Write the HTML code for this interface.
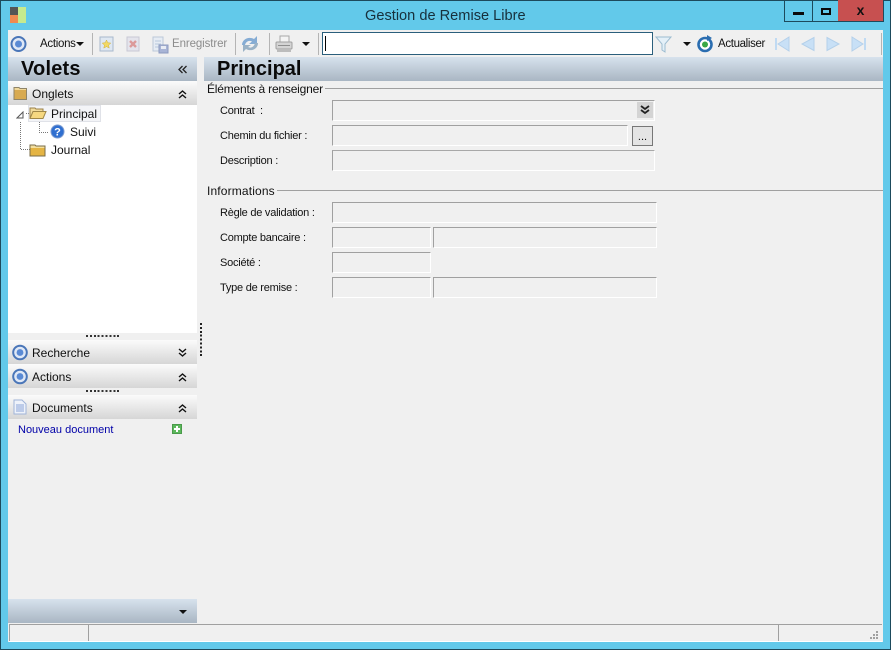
<!DOCTYPE html>
<html>
<head>
<meta charset="utf-8">
<style>
html,body{margin:0;padding:0;}
body{width:891px;height:650px;overflow:hidden;position:relative;background:#62c9ea;font-family:"Liberation Sans",sans-serif;font-size:12px;color:#111;}
div,span,svg{position:absolute;display:block;}
.t{white-space:nowrap;line-height:14px;}
.l{font-size:11px;letter-spacing:-.24px;left:220px;}
.f{box-sizing:border-box;background:#f0f0f0;border-top:1px solid #a0a0a0;border-left:1px solid #a0a0a0;border-right:1px solid #fff;border-bottom:1px solid #fff;}
.h{left:8px;width:189px;height:24px;background:linear-gradient(#fbfbfb,#d6d6d6);}
.b{left:8px;height:24px;background:linear-gradient(#d7e2ed,#a9b6c3);}
.sep{width:1px;height:22px;top:33px;background:#b4b4b4;}
.grip{height:2px;background:repeating-linear-gradient(90deg,#333 0 2px,transparent 2px 3.9px);}
.ttl{font-size:20px;line-height:22px;font-weight:bold;color:#0a0a0a;}
</style>
</head>
<body>
<!-- window frame -->
<div style="left:0;top:0;width:891px;height:1px;background:#1d4a5c"></div>
<div style="left:0;top:0;width:1px;height:650px;background:#1d4a5c"></div>
<div style="left:890px;top:0;width:1px;height:650px;background:#1d4a5c"></div>
<div style="left:0;top:649px;width:891px;height:1px;background:#1d4a5c"></div>

<!-- app icon -->
<div style="left:10px;top:7px;width:8px;height:8px;background:#555"></div>
<div style="left:10px;top:15px;width:8px;height:8px;background:#f08a50"></div>
<div style="left:18px;top:7px;width:8px;height:16px;background:#c6ea8e"></div>

<div class="t" style="left:365px;top:7px;font-size:14.6px;line-height:18px;color:#17303c">Gestion de Remise Libre</div>

<!-- caption buttons -->
<div style="left:784px;top:0;width:1px;height:22px;background:#1d4a5c"></div>
<div style="left:784px;top:21px;width:99px;height:1px;background:#1d4a5c"></div>
<div style="left:812px;top:0;width:1px;height:22px;background:#1d4a5c"></div>
<div style="left:838px;top:0;width:45px;height:21px;background:#c75050"></div>
<div style="left:883px;top:0;width:1px;height:22px;background:#1d4a5c"></div>
<div style="left:793px;top:12px;width:11px;height:3px;background:#0a0a0a"></div>
<div style="left:821px;top:8px;width:10px;height:7px;box-sizing:border-box;border:2px solid #0a0a0a"></div>
<div class="t" style="left:838px;top:3px;width:45px;text-align:center;font-weight:bold;font-size:14px;color:#111">x</div>

<!-- client -->
<div style="left:8px;top:30px;width:875px;height:612px;background:#f0f0f0"></div>

<!-- toolbar -->
<svg style="left:10px;top:35px" width="18" height="18" viewBox="0 0 18 18"><circle cx="8.500" cy="9" r="7" fill="#dfe8f6" stroke="#4a76b8" stroke-width="2"/><circle cx="8.500" cy="9" r="3.500" fill="#5a8ad4"/></svg>
<div class="t" style="left:40px;top:37px;font-size:11.500px;letter-spacing:-.3px">Actions</div>
<svg style="left:76px;top:42px" width="9" height="5"><path d="M0 0H8L4 4Z" fill="#111"/></svg>
<div class="sep" style="left:92px"></div>
<svg style="left:99px;top:36px" width="16" height="16"><rect x="1" y="1" width="13" height="14" fill="#dfe8f2" stroke="#a9b9cc"/><path d="M7.500 4l1.300 2.700 3 .4-2.200 2 .6 3-2.700-1.500-2.700 1.500.6-3-2.200-2 3-.4z" fill="#f2d964" stroke="#d0b040" stroke-width=".5"/></svg>
<svg style="left:125px;top:36px" width="16" height="16"><rect x="2" y="1" width="12" height="14" fill="#e4e4ec" stroke="#c8c8d4"/><path d="M5 5l6 6M11 5l-6 6" stroke="#dc9a9a" stroke-width="2.400"/></svg>
<svg style="left:152px;top:36px" width="18" height="18"><rect x="1" y="1" width="10" height="14" fill="#e6ecf4" stroke="#bcc8d8"/><path d="M3 5h6M3 8h6M3 11h6" stroke="#b8c8dc"/><rect x="7" y="9" width="9" height="8" fill="#a8b4d6" stroke="#8c9abf"/><rect x="9" y="10" width="5" height="3" fill="#e8ecf4"/></svg>
<div class="t" style="left:172px;top:37px;font-size:11.500px;letter-spacing:-.1px;color:#8c8c8c">Enregistrer</div>
<div class="sep" style="left:235px"></div>
<svg style="left:241px;top:35px" width="18" height="18"><path d="M1 10C1 4 8 1 13 4L16 1V9H8L11 6.500C8 5 5 6.500 4 10Z" fill="#85acd4"/><path d="M17 8C17 14 10 17 5 14L2 17V10H10L7 12C10 13.500 13 12 14 8Z" fill="#9ab2c6"/></svg>
<div class="sep" style="left:269px"></div>
<svg style="left:275px;top:35px" width="18" height="18"><rect x="5" y="1" width="9" height="6" fill="#f4f4f4" stroke="#a8a8a8"/><rect x="1" y="7" width="16" height="7" rx="1" fill="#d4d4d4" stroke="#a0a0a0"/><rect x="2" y="14" width="14" height="3" fill="#bcbcbc"/><rect x="3" y="10" width="12" height="1" fill="#8e8e8e"/></svg>
<svg style="left:302px;top:42px" width="9" height="5"><path d="M0 0H8L4 4Z" fill="#111"/></svg>
<div class="sep" style="left:318px"></div>
<div style="left:322px;top:32px;width:331px;height:23px;box-sizing:border-box;background:#fff;border:1px solid #2b5f7c"></div>
<div style="left:325px;top:36px;width:1px;height:15px;background:#000"></div>
<svg style="left:655px;top:35px" width="18" height="18"><path d="M1 2H16L10 9V17L7 15V9Z" fill="#e4f0f8" stroke="#9dbcd0"/></svg>
<svg style="left:683px;top:42px" width="9" height="5"><path d="M0 0H8L4 4Z" fill="#111"/></svg>
<svg style="left:696px;top:35px" width="18" height="18"><circle cx="9" cy="9.500" r="6.500" fill="#fff" stroke="#2a6db0" stroke-width="2.600"/><circle cx="9" cy="9.500" r="3" fill="#3aa845"/><path d="M11 0L16 3L11 6Z" fill="#2a6db0"/></svg>
<div class="t" style="left:718px;top:37px;font-size:11.500px;letter-spacing:-.35px">Actualiser</div>
<svg style="left:774px;top:36px" width="16" height="16"><rect x="1" y="2" width="2" height="12" fill="#c0daf2"/><path d="M15 1V15L4 8Z" fill="#c8e0f6" stroke="#b4d0ea"/></svg>
<svg style="left:800px;top:36px" width="16" height="16"><path d="M14 1.500V14.500L2 8Z" fill="#c8e0f6" stroke="#b4d0ea"/></svg>
<svg style="left:825px;top:36px" width="16" height="16"><path d="M2 1.500V14.500L14 8Z" fill="#c8e0f6" stroke="#b4d0ea"/></svg>
<svg style="left:851px;top:36px" width="16" height="16"><rect x="13" y="2" width="2" height="12" fill="#c0daf2"/><path d="M1 1V15L12 8Z" fill="#c8e0f6" stroke="#b4d0ea"/></svg>
<div class="sep" style="left:881px"></div>

<!-- left pane headers -->
<div class="b" style="top:57px;width:189px"></div>
<div class="t ttl" style="left:21px;top:58px;letter-spacing:.2px">Volets</div>
<svg style="left:178px;top:65px" width="10" height="9"><path d="M4.500 1L1 4.500L4.500 8M8.500 1L5 4.500L8.500 8" fill="none" stroke="#222" stroke-width="1.300"/></svg>
<div class="b" style="left:204px;top:57px;width:679px"></div>
<div class="t ttl" style="left:217px;top:58px">Principal</div>

<!-- Onglets -->
<div class="h" style="top:81px"></div>
<svg style="left:13px;top:86px" width="15" height="14"><path d="M1 1.500H6L7 2.500H13.500V13.500H1Z" fill="#f0d89a" stroke="#8f8468"/><rect x="1.500" y="4" width="11.500" height="9" fill="#d8aa50"/></svg>
<div class="t" style="left:32px;top:87px">Onglets</div>
<svg style="left:178px;top:90px" width="9" height="9"><path d="M1 4L4.500 1L8 4M1 8L4.500 5L8 8" fill="none" stroke="#111" stroke-width="1.400"/></svg>

<!-- tree -->
<div style="left:8px;top:105px;width:189px;height:228px;background:#fff"></div>
<svg style="left:16px;top:111px" width="9" height="9"><path d="M7 1V7H1Z" fill="#fff" stroke="#555"/></svg>
<div style="left:28px;top:105px;width:73px;height:17px;box-sizing:border-box;background:#f3f4f7;border:1px solid #e0e2e8"></div>
<svg style="left:10px;top:105px" width="60" height="52" fill="none" stroke="#777" stroke-dasharray="1 1"><path d="M10.500 17V44.500H20M29.500 17V27.500H39M16 8.500H19"/></svg>
<svg style="left:29px;top:106px" width="18" height="14"><path d="M1 12V2H6L7 3H14V5" fill="#f2dc9c" stroke="#9a8048"/><path d="M1 12.500L4 5.500H17L14 12.500Z" fill="#f6d880" stroke="#a08848"/></svg>
<div class="t" style="left:51px;top:107px">Principal</div>
<svg style="left:50px;top:124px" width="15" height="15"><circle cx="7.500" cy="7.500" r="6.500" fill="#2f6fd0" stroke="#7a9ad0"/><text x="7.500" y="11.500" font-family="Liberation Sans" font-size="11" font-weight="bold" fill="#fff" text-anchor="middle">?</text></svg>
<div class="t" style="left:70px;top:125px">Suivi</div>
<svg style="left:29px;top:143px" width="18" height="14"><path d="M1 2H6L7 3H16V13H1Z" fill="#f4e0a0" stroke="#7a6c48"/><rect x="1.500" y="5" width="14" height="7.500" fill="#e4b444"/></svg>
<div class="t" style="left:51px;top:143px">Journal</div>

<div class="grip" style="left:86px;top:335px;width:34px"></div>
<div style="left:200px;top:323px;width:2px;height:34px;background:repeating-linear-gradient(#222 0 2px,transparent 2px 3.900px)"></div>

<!-- Recherche -->
<div class="h" style="top:340px"></div>
<svg style="left:12px;top:344px" width="17" height="17"><circle cx="8" cy="8.500" r="6.800" fill="#dfe8f6" stroke="#4a76b8" stroke-width="2"/><circle cx="8" cy="8.500" r="3.400" fill="#5a8ad4"/></svg>
<div class="t" style="left:32px;top:346px">Recherche</div>
<svg style="left:178px;top:348px" width="9" height="9"><path d="M1 1L4.500 4L8 1M1 5L4.500 8L8 5" fill="none" stroke="#111" stroke-width="1.400"/></svg>

<!-- Actions -->
<div class="h" style="top:364px"></div>
<svg style="left:12px;top:368px" width="17" height="17"><circle cx="8" cy="8.500" r="6.800" fill="#dfe8f6" stroke="#4a76b8" stroke-width="2"/><circle cx="8" cy="8.500" r="3.400" fill="#5a8ad4"/></svg>
<div class="t" style="left:32px;top:370px">Actions</div>
<svg style="left:178px;top:373px" width="9" height="9"><path d="M1 4L4.500 1L8 4M1 8L4.500 5L8 8" fill="none" stroke="#111" stroke-width="1.400"/></svg>

<div class="grip" style="left:86px;top:390px;width:34px"></div>

<!-- Documents -->
<div class="h" style="top:395px"></div>
<svg style="left:13px;top:399px" width="14" height="16"><path d="M1 1H9L13 5V15H1Z" fill="#eef2fa" stroke="#a0b4d8"/><path d="M3 6H11M3 8H11M3 10H11M3 12H11" stroke="#8aa4d8"/></svg>
<div class="t" style="left:32px;top:401px">Documents</div>
<svg style="left:178px;top:404px" width="9" height="9"><path d="M1 4L4.500 1L8 4M1 8L4.500 5L8 8" fill="none" stroke="#111" stroke-width="1.400"/></svg>
<div class="t" style="left:18px;top:423px;color:#0000a8;font-size:11px">Nouveau document</div>
<svg style="left:172px;top:424px" width="11" height="11"><rect x=".5" y=".5" width="9" height="9" fill="#5cb85c" stroke="#4a9a4a"/><path d="M5 2V8M2 5H8" stroke="#fff" stroke-width="2"/></svg>

<!-- bottom bar of pane -->
<div class="b" style="top:599px;width:189px"></div>
<svg style="left:179px;top:610px" width="9" height="5"><path d="M0 0H8L4 4Z" fill="#111"/></svg>

<!-- status bar -->
<div style="left:9px;top:624px;width:873px;height:1px;background:#a0a0a0"></div>
<div style="left:9px;top:624px;width:1px;height:17px;background:#a0a0a0"></div>
<div style="left:88px;top:624px;width:1px;height:17px;background:#a0a0a0"></div>
<div style="left:778px;top:624px;width:1px;height:17px;background:#a0a0a0"></div>
<div style="left:9px;top:641px;width:873px;height:1px;background:#fff"></div>
<svg style="left:868px;top:630px" width="12" height="11" fill="#a0a0a0"><rect x="8" y="1" width="2" height="2"/><rect x="5" y="4" width="2" height="2"/><rect x="8" y="4" width="2" height="2"/><rect x="2" y="7" width="2" height="2"/><rect x="5" y="7" width="2" height="2"/><rect x="8" y="7" width="2" height="2"/></svg>

<!-- form -->
<div style="left:204px;top:88px;width:679px;height:1px;background:#a0a0a0"></div>
<div class="t" style="left:204px;top:82px;background:#f0f0f0;padding:0 2px 0 3px;letter-spacing:-.2px">Éléments à renseigner</div>

<div class="t l" style="top:104px">Contrat &nbsp;:</div>
<div class="f" style="left:332px;top:100px;width:323px;height:21px"></div>
<div style="left:637px;top:102px;width:16px;height:16px;background:#d4d4d4"></div>
<svg style="left:640px;top:105px" width="11" height="11"><path d="M1 1L5 4L9 1M1 5L5 8L9 5" fill="none" stroke="#222" stroke-width="1.800"/></svg>

<div class="t l" style="top:129px">Chemin du fichier :</div>
<div class="f" style="left:332px;top:125px;width:296px;height:21px"></div>
<div style="left:632px;top:126px;width:21px;height:20px;box-sizing:border-box;background:#e4e4e4;border:1px solid #777"></div>
<div class="t" style="left:632px;top:130px;width:21px;text-align:center;font-size:11px">...</div>

<div class="t l" style="top:154px">Description :</div>
<div class="f" style="left:332px;top:150px;width:323px;height:21px;border-top-color:#a8a8a8"></div>

<div style="left:204px;top:190px;width:679px;height:1px;background:#a0a0a0"></div>
<div class="t" style="left:204px;top:184px;background:#f0f0f0;padding:0 2px 0 3px;letter-spacing:.15px">Informations</div>

<div class="t l" style="top:206px">Règle de validation :</div>
<div class="f" style="left:332px;top:202px;width:325px;height:21px"></div>

<div class="t l" style="top:231px">Compte bancaire :</div>
<div class="f" style="left:332px;top:227px;width:99px;height:21px"></div>
<div class="f" style="left:433px;top:227px;width:224px;height:21px"></div>

<div class="t l" style="top:256px">Société :</div>
<div class="f" style="left:332px;top:252px;width:99px;height:21px"></div>

<div class="t l" style="top:281px">Type de remise :</div>
<div class="f" style="left:332px;top:277px;width:99px;height:21px"></div>
<div class="f" style="left:433px;top:277px;width:224px;height:21px"></div>
</body>
</html>
